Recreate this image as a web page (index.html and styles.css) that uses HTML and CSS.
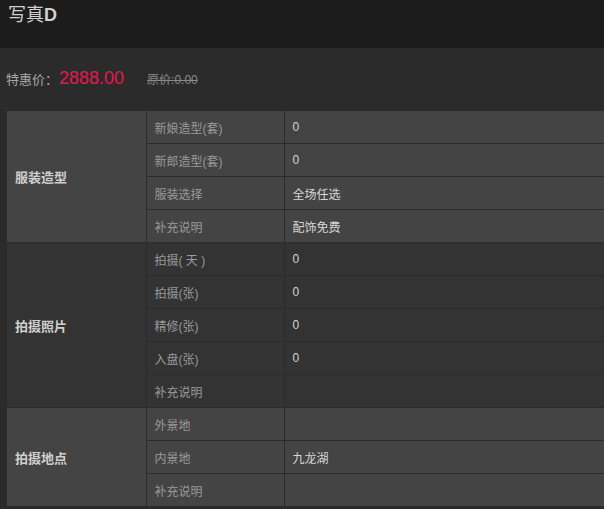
FILE: index.html
```html
<!DOCTYPE html>
<html lang="zh-CN">
<head>
<meta charset="utf-8">
<title>写真D</title>
<link rel="stylesheet" href="styles.css">
</head>
<body>
<header class="top">
  <h1 class="title">写真<b>D</b></h1>
</header>
<div class="price">
  <span class="label">特惠价：</span><span class="now">2888.00</span><span class="orig">原价:0.00</span>
</div>
<table class="spec">
  <tbody class="g light">
    <tr><th rowspan="4">服装造型</th><td class="k">新娘造型(套)</td><td class="v">0</td></tr>
    <tr><td class="k">新郎造型(套)</td><td class="v">0</td></tr>
    <tr><td class="k">服装选择</td><td class="v">全场任选</td></tr>
    <tr><td class="k">补充说明</td><td class="v">配饰免费</td></tr>
  </tbody>
  <tbody class="g dark">
    <tr><th rowspan="5">拍摄照片</th><td class="k">拍摄( 天 )</td><td class="v">0</td></tr>
    <tr><td class="k">拍摄(张)</td><td class="v">0</td></tr>
    <tr><td class="k">精修(张)</td><td class="v">0</td></tr>
    <tr><td class="k">入盘(张)</td><td class="v">0</td></tr>
    <tr><td class="k">补充说明</td><td class="v"></td></tr>
  </tbody>
  <tbody class="g light">
    <tr><th rowspan="3">拍摄地点</th><td class="k">外景地</td><td class="v"></td></tr>
    <tr><td class="k">内景地</td><td class="v">九龙湖</td></tr>
    <tr><td class="k">补充说明</td><td class="v"></td></tr>
  </tbody>
</table>
</body>
</html>
```

FILE: styles.css
```css
html, body {
  margin: 0;
  padding: 0;
  background: #2b2b2b;
  overflow: hidden;
  font-family: "Liberation Sans", "Noto Sans CJK SC", sans-serif;
}
.top {
  height: 48px;
  background: #1c1c1c;
  box-sizing: border-box;
  padding: 4px 0 0 8px;
}
.title {
  margin: 0;
  font-size: 18px;
  line-height: 22px;
  font-weight: normal;
  color: #d0d0d0;
}
.title b {
  font-weight: bold;
}
.price {
  height: 62px;
  box-sizing: border-box;
  padding: 20px 0 0 6px;
  display: flex;
  align-items: baseline;
}
.label {
  font-size: 13px;
  color: #a8a8a8;
}
.now {
  font-size: 18px;
  color: #e8174f;
  margin-left: 1px;
}
.orig {
  font-size: 12px;
  color: #8a8a8a;
  text-decoration: line-through;
  margin-left: 23px;
}
.spec {
  margin-left: 7px;
  width: calc(100% - 7px);
  border-collapse: collapse;
  table-layout: fixed;
}
.spec th, .spec td {
  border: 1px solid #2b2b2b;
  height: 33px;
  padding: 0 0 0 8px;
  box-sizing: border-box;
  text-align: left;
  vertical-align: middle;
  font-size: 12px;
}
.spec th {
  width: 139px;
  border-left: 0;
  font-size: 13px;
  font-weight: bold;
  color: #cfcfcf;
}
.spec td.k {
  width: 138px;
  color: #9a9a9a;
}
.spec td.v {
  border-right: 0;
  color: #d6d6d6;
}
.light th, .light td {
  background: #444444;
}
.dark th, .dark td {
  background: #333333;
}
```
